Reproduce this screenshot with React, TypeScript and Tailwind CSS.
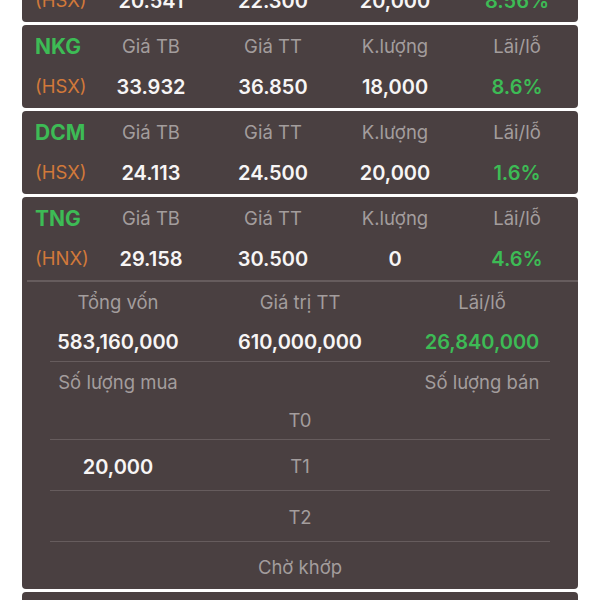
import React from 'react';

interface Holding {
  code: string;
  exchange: string;
  avgPrice: string;
  marketPrice: string;
  volume: string;
  pnl: string;
}

const holdings: Holding[] = [
  { code: 'PVD', exchange: 'HSX', avgPrice: '20.541', marketPrice: '22.300', volume: '20,000', pnl: '8.56%' },
  { code: 'NKG', exchange: 'HSX', avgPrice: '33.932', marketPrice: '36.850', volume: '18,000', pnl: '8.6%' },
  { code: 'DCM', exchange: 'HSX', avgPrice: '24.113', marketPrice: '24.500', volume: '20,000', pnl: '1.6%' },
];

const settlement = [
  { label: 'T0', buy: '', sell: '' },
  { label: 'T1', buy: '20,000', sell: '' },
  { label: 'T2', buy: '', sell: '' },
];

function HoldingRows({ h }: { h: Holding }) {
  return (
    <>
      <div className="grid grid-cols-[55px_repeat(4,1fr)] items-center h-[41px] pl-[13px] pt-[2px]">
        <span className="text-[21px] font-bold text-[#3dbb55]">{h.code}</span>
        <span className="text-center text-[18.5px] text-[#a39d9d]">Giá TB</span>
        <span className="text-center text-[18.5px] text-[#a39d9d]">Giá TT</span>
        <span className="text-center text-[18.5px] text-[#a39d9d]">K.lượng</span>
        <span className="text-center text-[18.5px] text-[#a39d9d]">Lãi/lỗ</span>
      </div>
      <div className="grid grid-cols-[55px_repeat(4,1fr)] items-center h-[42px] pl-[13px]">
        <span className="text-[18.5px] text-[#d2793a]">({h.exchange})</span>
        <span className="text-center text-[20px] font-semibold text-[#f7f5f5]">{h.avgPrice}</span>
        <span className="text-center text-[20px] font-semibold text-[#f7f5f5]">{h.marketPrice}</span>
        <span className="text-center text-[20px] font-semibold text-[#f7f5f5]">{h.volume}</span>
        <span className="text-center text-[20px] font-semibold text-[#3dbb55]">{h.pnl}</span>
      </div>
    </>
  );
}

export default function App() {
  return (
    <div className="w-[600px] h-[600px] overflow-hidden bg-white font-['Inter','Liberation_Sans',sans-serif]">
      <div className="flex flex-col gap-[3px] px-[22px] -mt-[61px]">
        {holdings.map((h) => (
          <div key={h.code} className="bg-[#4a4041] rounded-[4px]">
            <HoldingRows h={h} />
          </div>
        ))}

        <div className="bg-[#4a4041] rounded-[4px]">
          <HoldingRows
            h={{ code: 'TNG', exchange: 'HNX', avgPrice: '29.158', marketPrice: '30.500', volume: '0', pnl: '4.6%' }}
          />
          <div className="ml-[5px] h-[2px] bg-[#665c5d]" />

          {/* Portfolio summary */}
          <div className="px-[5px]">
            <div className="grid grid-cols-3 items-center h-[41px] text-center text-[18.5px] text-[#a39d9d]">
              <span>Tổng vốn</span>
              <span>Giá trị TT</span>
              <span>Lãi/lỗ</span>
            </div>
            <div className="grid grid-cols-3 items-center h-[38px] text-center text-[20px] font-semibold">
              <span className="text-[#f7f5f5]">583,160,000</span>
              <span className="text-[#f7f5f5]">610,000,000</span>
              <span className="text-[#3dbb55]">26,840,000</span>
            </div>
            <div className="mx-[23px] h-px bg-[#665c5d]" />

            <div className="grid grid-cols-3 items-center h-[40px] pt-[2px] text-center text-[18.5px] text-[#a39d9d]">
              <span>Số lượng mua</span>
              <span />
              <span>Số lượng bán</span>
            </div>
            {settlement.map((s) => (
              <div key={s.label}>
                <div
                  className={`grid grid-cols-3 items-center text-center ${
                    s.label === 'T0' ? 'h-[37px]' : 'h-[50px] pt-[3px]'
                  }`}
                >
                  <span className="text-[20px] font-semibold text-[#f7f5f5]">{s.buy}</span>
                  <span className="text-[18.5px] text-[#a39d9d]">{s.label}</span>
                  <span className="text-[20px] font-semibold text-[#f7f5f5]">{s.sell}</span>
                </div>
                <div className="mx-[23px] h-px bg-[#665c5d]" />
              </div>
            ))}
            <div className="flex items-center justify-center h-[47px] pt-[4px] text-[18.5px] text-[#a39d9d]">
              Chờ khớp
            </div>
          </div>
        </div>

        <div className="bg-[#4a4041] rounded-[4px] h-[40px]" />
      </div>
    </div>
  );
}
